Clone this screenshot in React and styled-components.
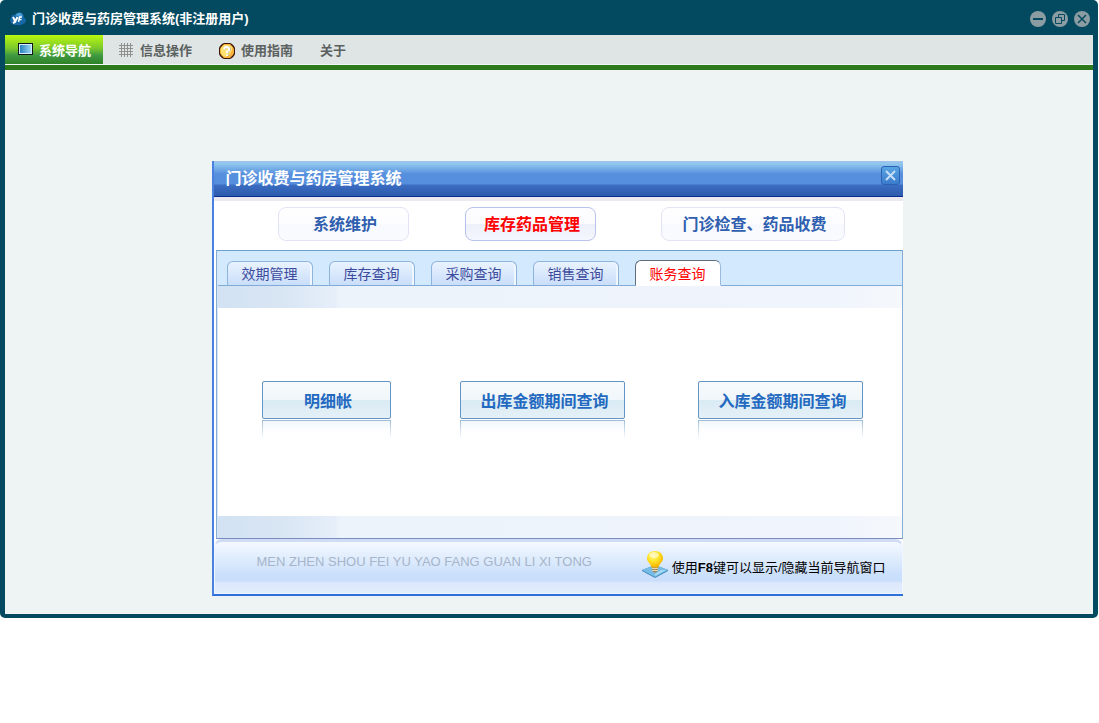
import React, { useState } from "react";
import styled, { createGlobalStyle, css } from "styled-components";

const GlobalStyle = createGlobalStyle`
  * {
    box-sizing: border-box;
  }
  body {
    margin: 0;
    background: #fff;
    font-family: "Liberation Sans", "Noto Sans CJK SC", sans-serif;
    font-size: 13px;
  }
  button {
    font-family: inherit;
    cursor: pointer;
  }
`;

const Window = styled.div`
  display: flex;
  flex-direction: column;
  margin-right: 1px;
  padding: 0 5px 4px;
  background: #034a61;
  border-radius: 5px;
`;
const TitleBar = styled.header`
  display: flex;
  align-items: center;
  height: 35px;
  padding: 3px 3px 0 5px;
`;
const WindowTitle = styled.h1`
  flex: 1;
  margin: 0 0 0 6px;
  font-size: 13px;
  font-weight: 700;
  line-height: 20px;
  color: #fff;
`;
const WindowControls = styled.div`
  display: flex;
  gap: 6px;
`;
const ControlButton = styled.button`
  display: flex;
  width: 16px;
  height: 16px;
  padding: 0;
  border: 0;
  background: none;
`;
const MenuBar = styled.nav`
  display: flex;
  gap: 1px;
  height: 35px;
  background: #dfe4e4;
  border-bottom: 5px solid #2c7a1c;
  box-shadow: inset 0 -1px 0 #f3f6f6;
`;
const MenuButton = styled.button`
  display: flex;
  align-items: center;
  gap: 6px;
  height: 29px;
  padding: 2px 13px 0;
  border: 0;
  background: none;
  font-size: 13px;
  font-weight: 700;
  line-height: 20px;
  color: #5b6161;
  ${(props) =>
    props.$active &&
    css`
      margin-right: 2px;
      padding: 2px 12px 0 13px;
      color: #fff;
      background: linear-gradient(#b9f90f, #7cc92b 45%, #3f9a41 70%, #2f8228);
    `}
`;
const Workspace = styled.main`
  display: flex;
  justify-content: center;
  padding: 91px 0 18px 16px;
  background: #eef3f3;
`;

const Dialog = styled.section`
  width: 100%;
  max-width: 691px;
  border-left: 2px solid #4a80e0;
  border-bottom: 2px solid #2d6fdc;
  background: #fff;
`;
const DialogHeader = styled.header`
  display: flex;
  justify-content: space-between;
  height: 36px;
  padding: 5px 3px 0 12px;
  border-bottom: 1px solid #0b2b8f;
  background: linear-gradient(
    #9fc3e8 0,
    #8fc6ee 3px,
    #568fdd 13px,
    #558edc 23px,
    #3c6dc2 24px,
    #2c5aac 35px
  );
`;
const DialogTitle = styled.h2`
  margin: 0;
  font-size: 16px;
  font-weight: 700;
  line-height: 26px;
  color: #fff;
`;
const CloseButton = styled.button`
  display: flex;
  align-items: center;
  justify-content: center;
  width: 19px;
  height: 19px;
  padding: 0;
  border: 1px solid #2b62b4;
  border-radius: 3px;
  background: linear-gradient(#58a5e4, #3b7bcb);
`;
const SectionNav = styled.nav`
  display: grid;
  grid-template-columns: 187fr 196fr 184fr;
  padding: 6px 58px 9px 64px;
  border-top: 4px solid #ebe8f0;
`;
const SectionButton = styled.button`
  justify-self: start;
  min-width: 131px;
  height: 34px;
  padding: 2px 14px 0 18px;
  border: 1px solid ${(props) => (props.$active ? "#b7c3ec" : "#e2e4f6")};
  border-radius: 8px;
  background: ${(props) =>
    props.$active
      ? "linear-gradient(#fdfdff 0, #fbfbfe 50%, #edeffa 51%, #f5f7fe)"
      : "linear-gradient(#fefeff 0, #fdfdff 50%, #f8f9fe 51%, #fafbff)"};
  font-size: 16px;
  font-weight: 700;
  line-height: 24px;
  color: ${(props) => (props.$active ? "#fe0000" : "#2f5fae")};
  white-space: nowrap;
  &:last-child {
    justify-self: stretch;
  }
`;
const Panel = styled.div`
  margin-left: 2px;
  padding-left: 1px;
  border: 1px solid #86add6;
  border-top-color: #6d9fcc;
  border-bottom-color: #7a8cc0;
  background: #d5e4f5;
`;
const TabList = styled.div`
  display: flex;
  align-items: flex-end;
  gap: 16px;
  height: 35px;
  padding-left: 9px;
  background: #d3e9fe;
  box-shadow: inset 0 -1px 0 #7fabd8;
`;
const Tab = styled.button`
  width: 86px;
  height: 25px;
  padding: 0;
  border: 1px solid #8db4dc;
  border-bottom-color: #7fabd8;
  border-radius: 6px 6px 0 0;
  background: linear-gradient(#e9f3fe, #cadefa);
  box-shadow: inset -2px 0 0 #f1f7fe;
  font-size: 14px;
  line-height: 20px;
  color: #3d4b9c;
  ${(props) =>
    props.$active &&
    css`
      height: 26px;
      padding-top: 2px;
      border-color: #5f6c7a #9bbbdc #fff #5f6c7a;
      background: #fff;
      box-shadow: none;
      color: #fe0000;
    `}
`;
const Band = styled.div`
  height: 22px;
  background: linear-gradient(
    90deg,
    #d2e2f2 0,
    #d9e6f4 10%,
    #e6eff9 17%,
    #ecf3fb 18%,
    #f0f4fc 90%,
    #f5f9fc
  );
`;
const ActionGrid = styled.div`
  display: grid;
  grid-template-columns: 199fr 238fr 164fr;
  padding: 73px 39px 77px 44px;
  background: #fff;
`;
const Action = styled.div`
  justify-self: start;
`;
const ActionButton = styled.button`
  display: block;
  min-width: 129px;
  height: 38px;
  padding: 3px 15px 0 19px;
  border: 1px solid #6296c6;
  border-radius: 2px;
  background: linear-gradient(#f8fafc 0, #f0f6fa 50%, #d9ebf4 51%, #e5f0f7);
  font-size: 16px;
  font-weight: 700;
  line-height: 24px;
  color: #2369c0;
  white-space: nowrap;
`;
const Reflection = styled.div`
  height: 19px;
  margin-top: 1px;
  border: 1px solid #9dbcd9;
  border-bottom: 0;
  background: linear-gradient(#eff6fa, #fff 80%);
  mask-image: linear-gradient(#000, transparent);
`;
const DialogFooter = styled.footer`
  display: flex;
  justify-content: space-between;
  height: 55px;
  padding: 9px 16px 0 42px;
  border: 1px solid #f0f6ff;
  border-top: 3px solid #cfdcf3;
  border-radius: 8px 8px 0 0;
  background: linear-gradient(#f4f9ff, #cadffb 65%, #c9defb 76%, #dce8fb 80%, #e2edfd);
`;
const Pinyin = styled.span`
  font-size: 13px;
  line-height: 22px;
  color: #a6b5c9;
`;
const Hint = styled.p`
  display: flex;
  gap: 4px;
  margin: 0;
  font-size: 13px;
  line-height: 34px;
  color: #000;
`;

const Logo = () => (
  <svg width="16" height="14" viewBox="0 0 16 14" aria-hidden="true">
    <path d="M2 3h3l2-2 3-1 3 2 1 3 2 3-1 3-4 2H4L1 11 0 8z" fill="#1668a8" />
    <path d="M5 3l3-2 3 0 2 3-3 1z" fill="#4a9ed6" />
    <path d="M3 5l2 4M7.500 5l-2.500 5-2 1" fill="none" stroke="#fff" strokeWidth="2" />
    <path d="M12 5H9.500L8.500 10M9.500 7.500h2" fill="none" stroke="#fff" strokeWidth="1.500" />
  </svg>
);

const ScreenIcon = () => (
  <svg width="15" height="15" viewBox="0 0 15 15" aria-hidden="true">
    <defs>
      <linearGradient id="screen">
        <stop offset="0" stopColor="#2583bd" />
        <stop offset="1" stopColor="#9dd6f4" />
      </linearGradient>
    </defs>
    <path d="M0 0h15v12H0z" fill="#10151c" />
    <path d="M1 1h13v10H1z" fill="#d4edf8" />
    <path d="M2 2h11v8H2z" fill="url(#screen)" />
  </svg>
);

const GridIcon = () => (
  <svg width="15" height="15" viewBox="0 0 15 15" aria-hidden="true">
    <path
      d="M2.500 0v14M5.500 0v14M8.500 0v14M11.500 0v14M0 2.500h14M0 5.500h14M0 8.500h14M0 11.500h14"
      stroke="#90908f"
      fill="none"
    />
  </svg>
);

const HelpIcon = () => (
  <svg width="16" height="16" viewBox="0 0 16 16" aria-hidden="true">
    <path d="M5 0h6l2 1 2 2 1 2v6l-1 2-2 2-2 1H5l-2-1-2-2-1-2V5l1-2 2-2z" fill="#3b1708" />
    <path d="M5 1h6l3 3 1 2v4l-1 2-3 3H5l-3-3-1-2V6l1-2z" fill="#f9b23c" />
    <path d="M5 2h5l3 2 0 3-2 4-4 3-3-1-2-3V5z" fill="#ffe370" />
    <path
      d="M6.500 6.500V5l1-1h2L11 5.500V7L9 8.500V10M9 11.500V13"
      fill="none"
      stroke="#b9b4ae"
      strokeWidth="1.500"
    />
    <path
      d="M5.500 6.500V5l1-1h2L10 5.500V7L8 8.500V10M8 11.500V13"
      fill="none"
      stroke="#fff"
      strokeWidth="2"
    />
  </svg>
);

const ControlIcon = ({ children }) => (
  <svg width="16" height="16" viewBox="0 0 16 16" aria-hidden="true">
    <circle cx="8" cy="8" r="8" fill="#8b9ca2" />
    <g fill="none" stroke="#034a61">
      {children}
    </g>
  </svg>
);

const BulbIcon = () => (
  <svg width="26" height="28" viewBox="0 0 26 28" aria-hidden="true">
    <defs>
      <radialGradient id="bulb" cx=".4" cy=".3" r=".7">
        <stop offset="0" stopColor="#fff78a" />
        <stop offset=".45" stopColor="#ffe62c" />
        <stop offset="1" stopColor="#f3b200" />
      </radialGradient>
    </defs>
    <path d="M0 20l13 7 13-7v-1l-13-5-13 5z" fill="#4388bb" />
    <path d="M0 19l13-5 13 5-13 7z" fill="#75bce6" />
    <path d="M13 23l6-4 5 0-11 6z" fill="#a5dbf5" />
    <path d="M10 15h6v5l-3 2-3-2z" fill="#a58a5c" />
    <path d="M10 17.500h6M10 19.500h6" stroke="#e3d6b8" />
    <path d="M13 0c5 0 8 3 8 7.500 0 4-4 5-4.500 9h-7C9 12.500 5 11.500 5 7.500 5 3 8 0 13 0z" fill="url(#bulb)" />
    <ellipse cx="12" cy="4" rx="5" ry="3" fill="#fff" opacity=".5" />
  </svg>
);

const menu = [
  { label: "系统导航", icon: <ScreenIcon /> },
  { label: "信息操作", icon: <GridIcon /> },
  { label: "使用指南", icon: <HelpIcon /> },
  { label: "关于" },
];
const sections = ["系统维护", "库存药品管理", "门诊检查、药品收费"];
const tabs = ["效期管理", "库存查询", "采购查询", "销售查询", "账务查询"];
const actions = ["明细帐", "出库金额期间查询", "入库金额期间查询"];

function App() {
  const [activeMenu, setActiveMenu] = useState(0);
  const [section, setSection] = useState(1);
  const [tab, setTab] = useState(4);

  return (
    <>
      <GlobalStyle />
      <Window>
        <TitleBar>
          <Logo />
          <WindowTitle>门诊收费与药房管理系统(非注册用户)</WindowTitle>
          <WindowControls>
            <ControlButton aria-label="最小化">
              <ControlIcon>
                <path d="M3 8h10" strokeWidth="2" />
              </ControlIcon>
            </ControlButton>
            <ControlButton aria-label="还原">
              <ControlIcon>
                <path d="M6.500 6V3.500h6v6H10M3.500 6.500h6v6h-6z" />
              </ControlIcon>
            </ControlButton>
            <ControlButton aria-label="关闭">
              <ControlIcon>
                <path d="M4 4l8 8M12 4l-8 8" strokeWidth="1.500" />
              </ControlIcon>
            </ControlButton>
          </WindowControls>
        </TitleBar>
        <MenuBar>
          {menu.map((item, index) => (
            <MenuButton
              key={item.label}
              $active={index === activeMenu}
              onClick={() => setActiveMenu(index)}
            >
              {item.icon}
              {item.label}
            </MenuButton>
          ))}
        </MenuBar>
        <Workspace>
          <Dialog>
            <DialogHeader>
              <DialogTitle>门诊收费与药房管理系统</DialogTitle>
              <CloseButton aria-label="关闭导航">
                <svg width="11" height="11" viewBox="0 0 11 11" aria-hidden="true">
                  <path d="M1 1l9 9M10 1l-9 9" stroke="#c5dff6" strokeWidth="2" />
                </svg>
              </CloseButton>
            </DialogHeader>
            <SectionNav>
              {sections.map((label, index) => (
                <SectionButton
                  key={label}
                  $active={index === section}
                  onClick={() => setSection(index)}
                >
                  {label}
                </SectionButton>
              ))}
            </SectionNav>
            <Panel>
              <TabList role="tablist">
                {tabs.map((label, index) => (
                  <Tab
                    key={label}
                    role="tab"
                    aria-selected={index === tab}
                    $active={index === tab}
                    onClick={() => setTab(index)}
                  >
                    {label}
                  </Tab>
                ))}
              </TabList>
              <Band />
              <ActionGrid>
                {actions.map((label) => (
                  <Action key={label}>
                    <ActionButton>{label}</ActionButton>
                    <Reflection />
                  </Action>
                ))}
              </ActionGrid>
              <Band />
            </Panel>
            <DialogFooter>
              <Pinyin>MEN ZHEN SHOU FEI YU YAO FANG GUAN LI XI TONG</Pinyin>
              <Hint>
                <BulbIcon />
                <span>
                  使用<b>F8</b>键可以显示/隐藏当前导航窗口
                </span>
              </Hint>
            </DialogFooter>
          </Dialog>
        </Workspace>
      </Window>
    </>
  );
}

export default App;
